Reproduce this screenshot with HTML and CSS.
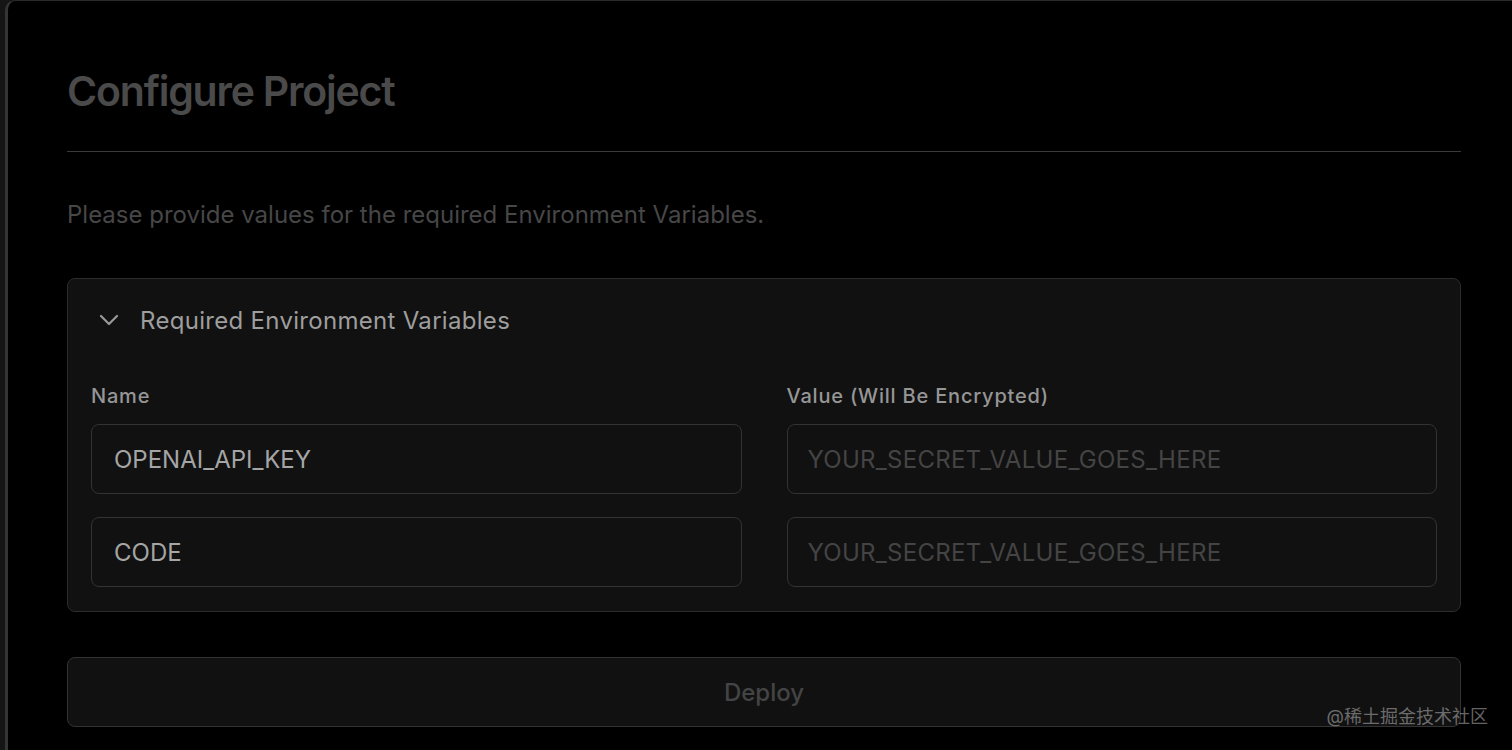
FILE: index.html
```html
<!DOCTYPE html>
<html lang="en">
<head>
<meta charset="utf-8">
<title>Configure Project</title>
<link rel="stylesheet" href="styles.css">
</head>
<body>
<div class="window">
  <main class="page">
    <h1 class="title">Configure Project</h1>
    <hr class="divider">
    <p class="intro">Please provide values for the required Environment Variables.</p>
    <section class="card">
      <div class="card-head">
        <svg class="chevron" width="22" height="22" viewBox="0 0 22 22" fill="none"><path d="M3 7l8 8 8-8" stroke="#9a9a9a" stroke-width="2.2" stroke-linecap="round" stroke-linejoin="round"/></svg>
        <span class="card-title">Required Environment Variables</span>
      </div>
      <div class="grid">
        <div class="label">Name</div>
        <div class="label">Value (Will Be Encrypted)</div>
        <div class="field"><span class="val">OPENAI_API_KEY</span></div>
        <div class="field"><span class="ph">YOUR_SECRET_VALUE_GOES_HERE</span></div>
        <div class="field"><span class="val">CODE</span></div>
        <div class="field"><span class="ph">YOUR_SECRET_VALUE_GOES_HERE</span></div>
      </div>
    </section>
    <div class="deploy">Deploy</div>
  </main>
  <div class="watermark">@稀土掘金技术社区</div>
</div>
</body>
</html>
```

FILE: styles.css
```css
html, body {
  margin: 0;
  padding: 0;
  height: 100%;
  background: #151515;
  overflow: hidden;
}
body {
  font-family: Inter, "Noto Sans", "Noto Sans CJK SC", sans-serif;
}
.window {
  margin-left: 5px;
  height: 100%;
  box-sizing: border-box;
  border-left: 3px solid #353535;
  border-top: 1px solid #2a2a2a;
  border-top-left-radius: 10px;
  background: #000;
  position: relative;
}
.page {
  padding: 50px 51px 0 59px;
}
.title {
  margin: 0;
  font-size: 41px;
  font-weight: 600;
  color: #4a4a4a;
  letter-spacing: -1.2px;
  line-height: 80px;
}
.divider {
  margin: 20px 0 0;
  border: 0;
  border-top: 1px solid #3a3a3a;
}
.intro {
  margin: 48px 0 0;
  font-size: 24px;
  line-height: 30px;
  color: #474747;
}
.card {
  margin-top: 48px;
  background: #111;
  border: 1px solid #2c2c2c;
  border-radius: 8px;
  padding: 0 23px 24px;
}
.card-head {
  display: flex;
  align-items: center;
  height: 82px;
  padding-left: 7px;
  gap: 20px;
}
.card-title {
  font-size: 24px;
  letter-spacing: 0.3px;
  color: #9e9e9e;
}
.grid {
  margin-top: 21px;
  display: grid;
  grid-template-columns: 1fr 1fr;
  column-gap: 45px;
  row-gap: 23px;
}
.label {
  font-size: 20px;
  font-weight: 500;
  letter-spacing: 0.8px;
  color: #969696;
  line-height: 28px;
  margin-bottom: -9px;
}
.field {
  height: 68px;
  border: 1px solid #333;
  border-radius: 8px;
  display: flex;
  align-items: center;
  padding: 0 22px;
  font-size: 24px;
}
.field .val { color: #a5a5a5; }
.field .ph { color: #444; letter-spacing: 0.3px; margin-left: -2px; }
.deploy {
  margin-top: 45px;
  height: 68px;
  background: #111;
  border: 1px solid #333;
  border-radius: 8px;
  display: flex;
  align-items: center;
  justify-content: center;
  font-size: 24px;
  font-weight: 500;
  color: #444;
}
.watermark {
  position: absolute;
  right: 24px;
  bottom: 22px;
  font-size: 18px;
  color: rgba(170,170,170,0.6);
}
```
